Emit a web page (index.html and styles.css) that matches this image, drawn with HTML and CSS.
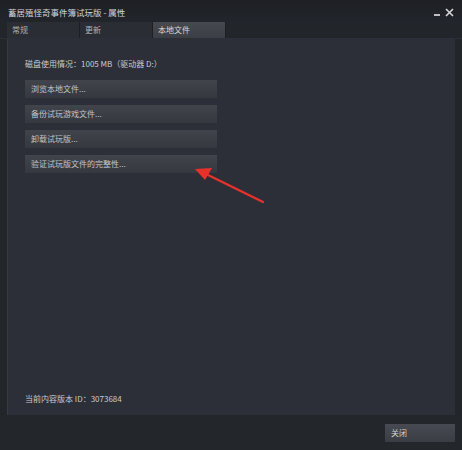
FILE: index.html
```html
<!DOCTYPE html>
<html>
<head>
<meta charset="utf-8">
<link rel="stylesheet" href="styles.css">
</head>
<body>
<div class="window">
  <div class="titlebar">
    <span class="title">蓄居殖怪奇事件簿试玩版 - 属性</span>
    <div class="controls">
      <span class="min"></span>
      <svg class="close-x" width="9" height="9" viewBox="0 0 9 9"><path d="M1 1L8 8M8 1L1 8" stroke="#d8d8d8" stroke-width="1.6"/></svg>
    </div>
  </div>
  <div class="tabs">
    <div class="tab">常规</div>
    <div class="tab">更新</div>
    <div class="tab active">本地文件</div>
  </div>
  <div class="panel">
    <div class="usage">磁盘使用情况：1005 MB（驱动器 D:）</div>
    <div class="buttons">
      <div class="btn">浏览本地文件...</div>
      <div class="btn">备份试玩游戏文件...</div>
      <div class="btn">卸载试玩版...</div>
      <div class="btn">验证试玩版文件的完整性...</div>
    </div>
    <div class="spacer"></div>
    <div class="version">当前内容版本 ID：3073684</div>
  </div>
  <div class="footer">
    <div class="close-btn">关闭</div>
  </div>
  <svg class="arrow" width="80" height="45" viewBox="0 0 80 45">
    <path d="M71 38 L14 10" stroke="#e8312b" stroke-width="2.4" stroke-linecap="round"/>
    <path d="M3 5 L20 4 L13 16 Z" fill="#e8312b"/>
  </svg>
</div>
</body>
</html>
```
FILE: styles.css
```css
html, body {
  margin: 0;
  padding: 0;
  background: #1f2126;
}
.window {
  position: relative;
  width: 462px;
  height: 450px;
  background: #22252a;
  font-family: "Noto Sans CJK SC", "Liberation Sans", sans-serif;
  font-size: 8px;
  color: #c6c8cc;
  display: flex;
  flex-direction: column;
  overflow: hidden;
}
.titlebar {
  height: 22px;
  display: flex;
  align-items: center;
  justify-content: space-between;
  padding: 0 8px 0 8px;
  background: linear-gradient(#1d1f24, #22252b);
}
.title {
  color: #d4d5d8;
  font-size: 8.5px;
  margin-top: 2px;
}
.controls {
  display: flex;
  align-items: center;
  gap: 5px;
  margin-top: 2px;
}
.min {
  width: 6px;
  height: 2px;
  background: #bfbfbf;
  margin-top: 5px;
}
.tabs {
  display: flex;
  height: 16px;
  padding-left: 7px;
  border-bottom: 1px solid #2c2f37;
}
.tab {
  width: 73px;
  box-sizing: border-box;
  padding-left: 5px;
  line-height: 16px;
  background: #2a2d33;
  border-right: 1px solid #1d1f23;
  color: #aeb0b4;
}
.tab.active {
  background: linear-gradient(#464950, #3b3e45);
  color: #d8d9dc;
}
.panel {
  flex: 1;
  margin-left: 7px;
  margin-right: 7px;
  background: #2c2f37;
  border-left: 1px solid #373a42;
  display: flex;
  flex-direction: column;
  padding: 19px 0 10px 17px;
}
.usage {
  color: #c9cbcf;
  line-height: 12px;
}
.buttons {
  margin-top: 10px;
  display: flex;
  flex-direction: column;
  gap: 7px;
}
.btn {
  width: 192px;
  height: 18px;
  box-sizing: border-box;
  padding-left: 6px;
  line-height: 18px;
  background: linear-gradient(#41444b, #35383f);
  color: #c2c4c8;
}
.spacer {
  flex: 1;
}
.version {
  color: #c9cbcf;
  line-height: 12px;
}
.footer {
  height: 35px;
  display: flex;
  justify-content: flex-end;
  align-items: center;
  padding-right: 7px;
  background: #23262b;
}
.close-btn {
  width: 70px;
  height: 18px;
  box-sizing: border-box;
  padding-left: 6px;
  line-height: 18px;
  background: linear-gradient(#474a52, #3a3d44);
  color: #d0d1d4;
  margin-top: 1px;
}
.arrow {
  position: absolute;
  left: 192px;
  top: 164px;
}
```
